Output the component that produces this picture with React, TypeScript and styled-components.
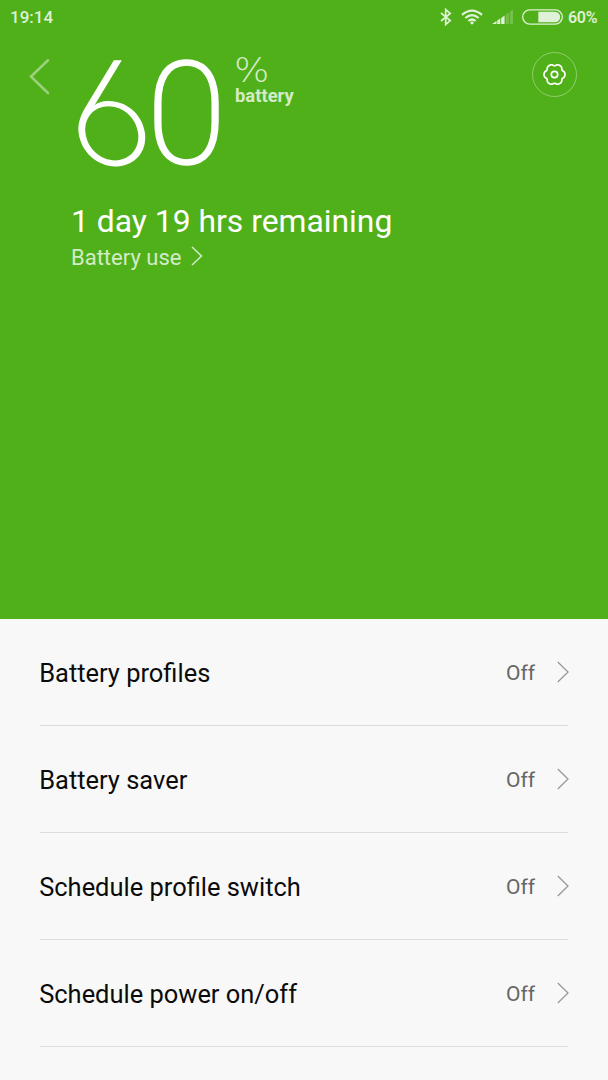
import React from "react";
import styled, { createGlobalStyle } from "styled-components";

const GlobalStyle = createGlobalStyle`
  * { box-sizing: border-box; }
  body { margin: 0; background: #f8f8f8; font-family: Roboto, "Liberation Sans", sans-serif; }
`;

const Screen = styled.main`
  width: 608px;
  height: 1080px;
  overflow: hidden;
  display: flex;
  flex-direction: column;
  background: #f8f8f8;
`;

const Hero = styled.section`
  height: 618.5px;
  flex: none;
  background: #50b019;
  color: #fff;
`;

const StatusBar = styled.div`
  height: 34px;
  padding: 0 11px 0 10px;
  display: flex;
  align-items: center;
  color: #dff1d6;
  font-size: 17px;
  font-weight: 500;
`;

const StatusIcons = styled.div`
  margin-left: auto;
  display: flex;
  align-items: center;
  gap: 9px;
  svg { display: block; }
`;

const BatteryIcon = styled.svg`
  margin-left: -1px;
`;

const Percent = styled.span`
  width: 29px;
  margin-left: -4px;
  font-size: 16px;
  font-weight: 600;
  letter-spacing: -0.3px;
`;

const Header = styled.div`
  display: flex;
  height: 150px;
  align-items: flex-start;
`;

const BackButton = styled.button`
  width: 71px;
  height: 84px;
  padding: 0;
  border: 0;
  background: none;
  svg { display: block; }
`;

const Level = styled.div`
  display: flex;
  margin: 26px 0 0 7px;
`;

const Digit = styled.span<{ $face: string; $size: number; $weight: number; $shape: string; $gap: number; $line: number; $outline: number }>`
  display: flex;
  justify-content: center;
  width: 67px;
  height: 107px;
  margin-right: ${(p) => p.$gap}px;
  font-family: ${(p) => p.$face}, Roboto, sans-serif;
  font-feature-settings: "ss01" 1;
  font-size: ${(p) => p.$size}px;
  font-weight: ${(p) => p.$weight};
  line-height: ${(p) => p.$line}px;
  transform: ${(p) => p.$shape};
  -webkit-text-stroke: ${(p) => p.$outline}px #fff;
`;

const Unit = styled.div`
  display: flex;
  flex-direction: column;
  color: #d3ebc6;
`;

const PercentSign = styled.span`
  height: 25px;
  line-height: 21px;
  font-family: "DejaVu Sans Light", "DejaVu Sans", sans-serif;
  font-weight: 200;
  font-size: 33px;
  margin-left: -1.5px;
  transform: scaleX(1.13);
  transform-origin: left;
`;

const UnitLabel = styled.span`
  font-size: 18.4px;
  font-weight: 700;
  line-height: 22px;
`;

const SettingsButton = styled.button`
  margin: 18px 31px 0 auto;
  width: 45px;
  height: 45px;
  padding: 0;
  border: 1px solid #91cd6f;
  border-radius: 50%;
  background: none;
  display: grid;
  place-items: center;
`;

const Summary = styled.div`
  padding: 17px 0 0 71px;
`;

const Remaining = styled.div`
  font-size: 31.85px;
  line-height: 40px;
`;

const UsageLink = styled.div`
  display: flex;
  align-items: center;
  height: 32px;
  font-size: 22px;
  color: #d3ebc6;
  svg { margin: -2px 0 0 10px; }
`;

const Menu = styled.ul`
  margin: 0;
  padding: 0 40px;
  list-style: none;
`;

const Row = styled.li`
  height: 107px;
  display: flex;
  align-items: center;
  border-bottom: 1px solid #dcdcdc;
  padding-top: 2px;
  svg { margin: -2px -1px 0 0; }
`;

const RowLabel = styled.span`
  flex: 1;
  margin-left: -0.8px;
  padding-top: 1px;
  font-size: 25.45px;
  color: #0b0b0b;
`;

const RowValue = styled.span`
  font-size: 21px;
  color: #666;
  margin-right: 22px;
`;

const options = ["Battery profiles", "Battery saver", "Schedule profile switch", "Schedule power on/off"];

const gearPoints = Array.from({ length: 73 }, (_, i) => {
  const a = (i * Math.PI) / 36;
  const r = 9.8 + 0.85 * Math.cos(6 * a) - 0.22 * Math.cos(12 * a);
  return `${(11.5 + r * Math.cos(a)).toFixed(2)},${(11.5 + r * Math.sin(a)).toFixed(2)}`;
}).join(" ");

export default function App() {
  return (
    <Screen>
      <GlobalStyle />
      <Hero>
        <StatusBar>
          <span>19:14</span>
          <StatusIcons>
            <svg width="12" height="18" viewBox="0 0 12 18" fill="none" stroke="#dff1d6" strokeWidth="1.7">
              <path d="M1 5L10.2 12.6L5.7 16.5V1.5L10.2 5.4L1 13" />
            </svg>
            <svg width="22" height="16" viewBox="0 0 22 16" fill="none" stroke="#dff1d6" strokeWidth="2.2">
              <path d="M1 5.8Q11 -2.6 21 5.8M4.3 9Q11 3.4 17.7 9M7.4 12Q11 9 14.6 12" />
              <circle cx="11" cy="13.8" r="1.6" fill="#dff1d6" stroke="none" />
            </svg>
            <svg width="22" height="16" viewBox="0 0 22 16" fill="#dff1d6">
              <path d="M0 15L4.5 12V15ZM5.2 11.6L8.3 9.6V15H5.2ZM9.2 9L12.6 6.5V15H9.2Z" />
              <path d="M13.8 5.7L16.9 3.5V15H13.8ZM17.9 2.8L21 .6V15H17.9Z" opacity=".25" />
            </svg>
            <BatteryIcon width="41" height="16" viewBox="0 0 41 16">
              <rect x=".7" y=".9" width="39.6" height="14.2" rx="7.1" fill="none" stroke="#dff1d6" strokeWidth="1.3" />
              <path d="M16.3 2.8H33A5.2 5.2 0 0 1 33 13.2H16.3Z" fill="#dff1d6" />
            </BatteryIcon>
            <Percent>60%</Percent>
          </StatusIcons>
        </StatusBar>
        <Header>
          <BackButton aria-label="Back">
            <svg width="71" height="84" viewBox="0 34 71 84" fill="none" stroke="#9bd07c" strokeWidth="2.6" strokeLinecap="round">
              <path d="M48 60.3L31 76.6L48 93" />
            </svg>
          </BackButton>
          <Level>
            <Digit $face="Inter" $size={144} $weight={200} $shape="translateX(-2px) skewX(7deg) scaleX(1.06)" $gap={8} $line={106} $outline={0}>6</Digit>
            <Digit $face="Roboto" $size={142} $weight={200} $shape="scaleX(1.03)" $gap={15} $line={112} $outline={1.4}>0</Digit>
            <Unit>
              <PercentSign>%</PercentSign>
              <UnitLabel>battery</UnitLabel>
            </Unit>
          </Level>
          <SettingsButton aria-label="Settings">
            <svg width="23" height="23" viewBox="0 0 23 23" fill="none" stroke="#fff" strokeWidth="1.7" strokeLinejoin="round">
              <polygon points={gearPoints} />
              <circle cx="11.5" cy="11.5" r="3.2" />
            </svg>
          </SettingsButton>
        </Header>
        <Summary>
          <Remaining>1 day 19 hrs remaining</Remaining>
          <UsageLink>
            Battery use
            <svg width="12" height="20" viewBox="0 0 12 20" fill="none" stroke="#d3ebc6" strokeWidth="1.5">
              <path d="M1 1L10.5 10L1 19" />
            </svg>
          </UsageLink>
        </Summary>
      </Hero>
      <Menu>
        {options.map((name) => (
          <Row key={name}>
            <RowLabel>{name}</RowLabel>
            <RowValue>Off</RowValue>
            <svg width="12" height="22" viewBox="0 0 12 22" fill="none" stroke="#999" strokeWidth="1.3">
              <path d="M.8 1L11 11L.8 21" />
            </svg>
          </Row>
        ))}
      </Menu>
    </Screen>
  );
}
